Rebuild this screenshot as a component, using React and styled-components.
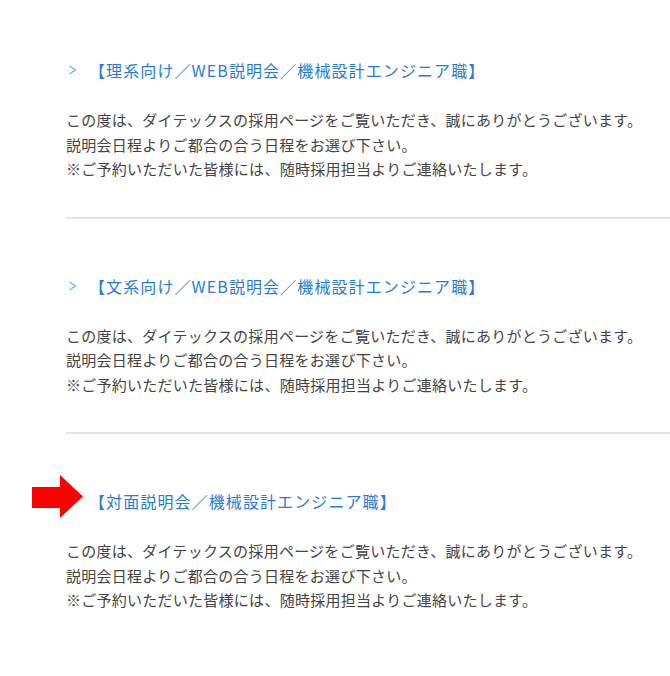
import React from 'react';
import styled, { createGlobalStyle } from 'styled-components';

const GlobalStyle = createGlobalStyle`
  html, body {
    margin: 0;
    padding: 0;
    background: #fff;
  }
  body {
    font-family: "Noto Sans CJK JP", "Noto Sans", sans-serif;
    overflow: hidden;
  }
`;

const Page = styled.main`
  padding: 3px 0 0 66px;
`;

const Section = styled.section`
  position: relative;
  padding: 55px 0 35px;
  border-bottom: ${(p) => (p.last ? 'none' : '2px solid #e4e4e4')};
`;

const Heading = styled.h3`
  display: flex;
  align-items: center;
  gap: 12px;
  margin: 0;
  height: 24px;
  font-size: 16px;
  font-weight: 400;
  line-height: 24px;
  color: #2b7bd6;
  letter-spacing: 1.1px;
`;

const Chevron = styled.svg`
  flex: none;
  width: 9px;
  height: 10px;
  margin-left: 2px;
`;

const Body = styled.p`
  margin: 26px 0 0;
  font-size: 15px;
  line-height: 24.5px;
  color: #444;
  letter-spacing: 0.26px;
  white-space: nowrap;
`;

const Marker = styled.svg`
  position: absolute;
  left: -34px;
  top: 41px;
  width: 51px;
  height: 43px;
`;

const sessions = [
  '【理系向け／WEB説明会／機械設計エンジニア職】',
  '【文系向け／WEB説明会／機械設計エンジニア職】',
  '【対面説明会／機械設計エンジニア職】',
];

function Session({ title, last, marked }) {
  return (
    <Section last={last}>
      <Heading>
        <Chevron viewBox="0 0 9 10">
          <polyline points="1.5,1 7.5,5 1.5,9" fill="none" stroke="#6cb8e8" strokeWidth="1.4" />
        </Chevron>
        <span>{title}</span>
      </Heading>
      <Body>
        この度は、ダイテックスの採用ページをご覧いただき、誠にありがとうございます。
        <br />
        説明会日程よりご都合の合う日程をお選び下さい。
        <br />
        ※ご予約いただいた皆様には、随時採用担当よりご連絡いたします。
      </Body>
      {marked && (
        <Marker viewBox="0 0 51 43">
          <polygon points="0,12 28,12 28,0 51,21.5 28,43 28,33 0,33" fill="#ff0000" />
        </Marker>
      )}
    </Section>
  );
}

export default function App() {
  return (
    <Page>
      <GlobalStyle />
      {sessions.map((title, i) => (
        <Session
          key={title}
          title={title}
          last={i === sessions.length - 1}
          marked={i === sessions.length - 1}
        />
      ))}
    </Page>
  );
}
